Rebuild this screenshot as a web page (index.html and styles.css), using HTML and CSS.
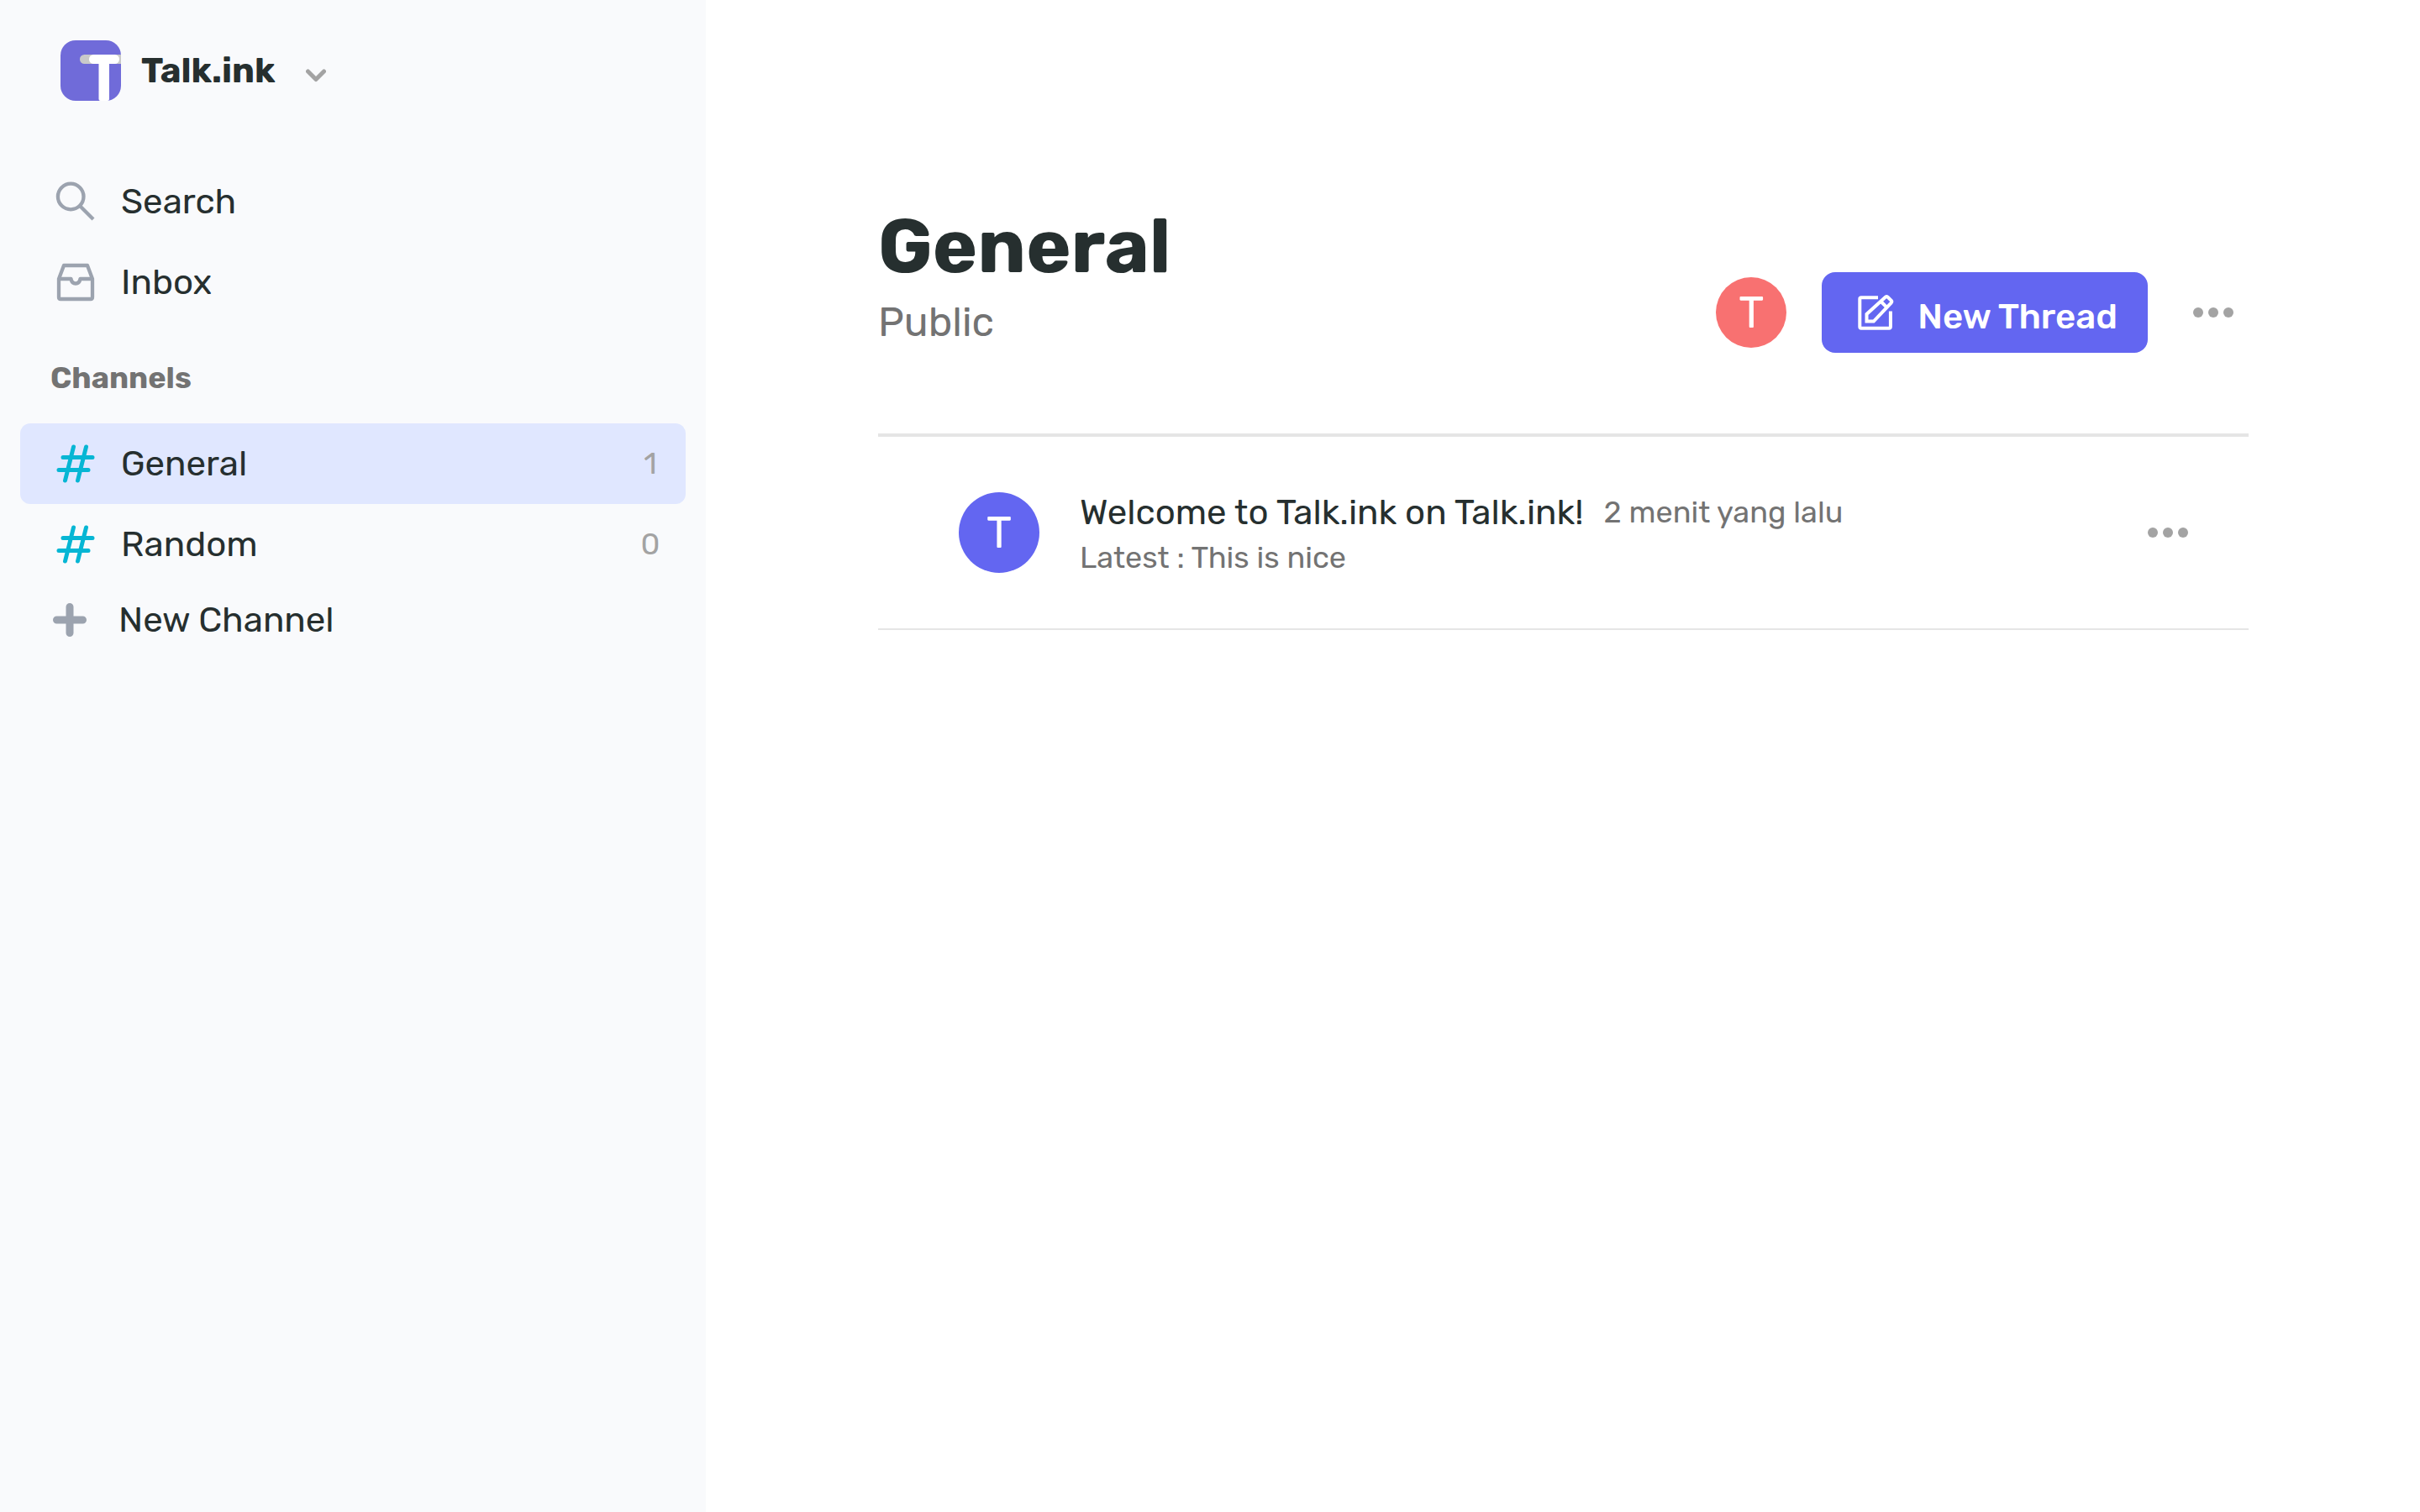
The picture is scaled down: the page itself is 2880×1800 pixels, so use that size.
FILE: index.html
```html
<!DOCTYPE html>
<html lang="en">
<head>
<meta charset="utf-8">
<title>Talk.ink</title>
<link rel="stylesheet" href="styles.css">
</head>
<body>
<div class="app">
  <aside class="sidebar">
    <button class="workspace" type="button">
      <svg class="logo" viewBox="0 0 72 72" aria-hidden="true">
        <clipPath id="logo-shape"><rect width="72" height="72" rx="18"/></clipPath>
        <rect width="72" height="72" rx="18" fill="#706bd9"/>
        <g clip-path="url(#logo-shape)">
          <rect x="23" y="17" width="60" height="11" rx="5.5" fill="#c9c9c9"/>
        </g>
        <rect x="34" y="17" width="36" height="11" rx="5.5" fill="#fff"/>
        <path d="M45.500 22h12.500v48q0 2-2 2h-8.500q-2 0-2-2z" fill="#fff"/>
      </svg>
      <span class="workspace-name">Talk.ink</span>
      <svg class="chevron" viewBox="0 0 24 16" aria-hidden="true"><path d="M2.500 3 12 12.500 21.500 3"/></svg>
    </button>
    <nav class="nav">
      <a class="nav-item" href="#search">
        <svg class="icon" viewBox="0 0 48 48" aria-hidden="true"><circle cx="18.200" cy="18" r="15.300"/><path d="M29 29 45 45"/></svg>
        <span class="label">Search</span>
      </a>
      <a class="nav-item" href="#inbox">
        <svg class="icon" viewBox="0 0 48 48" aria-hidden="true"><path d="M4 20 10 4h28l6 16v22q0 2-2 2H6q-2 0-2-2zM4 20h14.500q1 5.500 5.500 5.500t5.500-5.500h14.500" stroke-linejoin="round"/></svg>
        <span class="label">Inbox</span>
      </a>
    </nav>
    <h2 class="section-title">Channels</h2>
    <nav class="nav">
      <a class="nav-item active" href="#general" aria-current="page">
        <svg class="icon hash" viewBox="0 0 48 48" aria-hidden="true"><path d="M21.500 4 11.500 44M36.500 4 26.500 44M9 16.500h35M4 31.500h35"/></svg>
        <span class="label">General</span>
        <span class="count">1</span>
      </a>
      <a class="nav-item" href="#random">
        <svg class="icon hash" viewBox="0 0 48 48" aria-hidden="true"><path d="M21.500 4 11.500 44M36.500 4 26.500 44M9 16.500h35M4 31.500h35"/></svg>
        <span class="label">Random</span>
        <span class="count">0</span>
      </a>
    </nav>
    <button class="new-channel" type="button">
      <svg class="plus" viewBox="0 0 40 40" aria-hidden="true"><path d="M20 4.500v31M4.500 20h31"/></svg>
      <span class="label">New Channel</span>
    </button>
  </aside>
  <main class="main">
    <header class="channel-header">
      <div class="heading">
        <h1 class="title">General</h1>
        <p class="visibility">Public</p>
      </div>
      <div class="actions">
        <span class="avatar member">T</span>
        <button class="new-thread" type="button">
          <svg class="edit" viewBox="0 0 44 44" aria-hidden="true"><path d="M25 4.200H5q-1.700 0-1.700 1.700V39q0 1.700 1.700 1.700h33.200q1.700 0 1.700-1.700V20.500"/><path d="M11.500 32.500v-8.500L34 3.500q1.200-1 2.400 0l4.400 4.400q1 1.200 0 2.400L19.800 32.500zM28.500 9l7.200 7.200"/></svg>
          <span>New Thread</span>
        </button>
        <button class="more" type="button" aria-label="Channel options">
          <svg class="dots" viewBox="0 0 48 12" aria-hidden="true"><circle cx="6" cy="6" r="6"/><circle cx="24" cy="6" r="6"/><circle cx="42" cy="6" r="6"/></svg>
        </button>
      </div>
    </header>
    <article class="thread">
      <span class="avatar author">T</span>
      <div class="thread-text">
        <div class="thread-line">
          <a class="thread-title" href="#welcome">Welcome to Talk.ink on Talk.ink!</a>
          <time class="time">2 menit yang lalu</time>
        </div>
        <p class="latest">Latest : This is nice</p>
      </div>
      <button class="more" type="button" aria-label="Thread options">
        <svg class="dots" viewBox="0 0 48 12" aria-hidden="true"><circle cx="6" cy="6" r="6"/><circle cx="24" cy="6" r="6"/><circle cx="42" cy="6" r="6"/></svg>
      </button>
    </article>
  </main>
</div>
</body>
</html>
```
FILE: styles.css
```css
* {
  box-sizing: border-box;
}

body,
h1,
h2,
p {
  margin: 0;
}

body {
  background: #fff;
  color: #262f2f;
  font-family: Rubik, Roboto, "Liberation Sans", sans-serif;
  font-size: 42px;
  line-height: 60px;
}

button {
  padding: 0;
  border: 0;
  background: none;
  color: inherit;
  font: inherit;
  cursor: pointer;
}

a {
  color: inherit;
  text-decoration: none;
}

svg {
  display: block;
  flex: none;
}

.app {
  display: flex;
  min-height: 100vh;
}

.sidebar {
  flex: 0 0 840px;
  padding: 48px 24px;
  background: #f9fafc;
}

.workspace {
  display: flex;
  align-items: center;
  margin: 0 48px 72px;
}

.logo {
  width: 72px;
  height: 72px;
}

.workspace-name {
  margin: 0 36px 0 24px;
  font-weight: 700;
}

.chevron {
  width: 24px;
  height: 16px;
  margin-top: 12px;
  fill: none;
  stroke: #a3a3a3;
  stroke-width: 5;
  stroke-linecap: round;
  stroke-linejoin: round;
}

.nav-item {
  display: flex;
  align-items: center;
  gap: 30px;
  height: 96px;
  padding: 0 30px 0 42px;
  border-radius: 12px;
}

.nav-item.active {
  background: #e0e7ff;
}

.icon {
  width: 48px;
  height: 48px;
  fill: none;
  stroke: #9ca3af;
  stroke-width: 4.3;
}

.icon.hash {
  stroke: #06b6d4;
  stroke-width: 5;
  stroke-linecap: round;
}

.count {
  min-width: 24px;
  margin-left: auto;
  color: #a3a3a3;
  font-size: 36px;
  text-align: center;
}

.section-title {
  margin: 36px 36px 24px;
  color: #737373;
  font-size: 36px;
  font-weight: 700;
}

.new-channel {
  display: flex;
  align-items: center;
  gap: 38px;
  margin: 12px 39px;
}

.plus {
  width: 40px;
  height: 40px;
  fill: none;
  stroke: #9ca3af;
  stroke-width: 9;
  stroke-linecap: round;
}

.main {
  flex: 1;
  padding: 240px 204px 48px 205px;
}

.channel-header {
  display: flex;
  justify-content: space-between;
  align-items: flex-end;
  padding-bottom: 96px;
  border-bottom: 4px solid #e5e5e5;
}

.title {
  font-size: 90px;
  font-weight: 700;
  line-height: 108px;
}

.visibility {
  padding: 6px 0;
  color: #737373;
  font-size: 48px;
}

.actions {
  display: flex;
  align-items: center;
}

.avatar {
  display: flex;
  flex: none;
  justify-content: center;
  align-items: center;
  border-radius: 50%;
  color: #fff;
}

.member {
  width: 84px;
  height: 84px;
  margin-right: 42px;
  background: #f87171;
  font-size: 52px;
}

.author {
  width: 96px;
  height: 96px;
  background: #6366f1;
  font-size: 52px;
}

.new-thread {
  display: flex;
  align-items: center;
  gap: 28px;
  height: 96px;
  margin-right: 36px;
  padding: 10px 36px 0 42px;
  border-radius: 16px;
  background: #6366f1;
  color: #fff;
  font-weight: 500;
}

.edit {
  width: 44px;
  height: 44px;
  margin-bottom: 10px;
  fill: none;
  stroke: #fff;
  stroke-width: 4;
}

.more {
  padding: 18px;
}

.dots {
  width: 48px;
  height: 12px;
  fill: #a3a3a3;
}

.thread {
  display: flex;
  align-items: center;
  gap: 48px;
  padding: 60px 54px 60px 96px;
  border-bottom: 2px solid #e5e5e5;
}

.thread-text {
  flex: 1;
}

.thread-line {
  display: flex;
  align-items: center;
  gap: 24px;
}

.time,
.latest {
  color: #737373;
  font-size: 36px;
}

.latest {
  line-height: 48px;
}
```
